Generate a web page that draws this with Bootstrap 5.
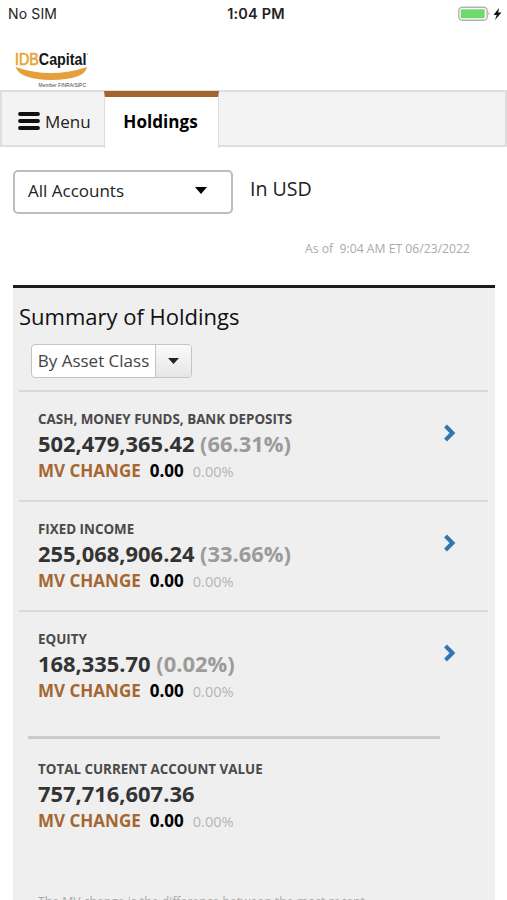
<!DOCTYPE html>
<html lang="en">
<head>
<meta charset="utf-8">
<meta name="viewport" content="width=device-width, initial-scale=1">
<title>Holdings</title>
<link href="https://cdn.jsdelivr.net/npm/bootstrap@5.3.0/dist/css/bootstrap.min.css" rel="stylesheet">
<style>
body{font-family:"Open Sans",sans-serif;color:#222;height:900px;overflow:hidden;line-height:1;white-space:nowrap}
.statusbar{height:28px;font-family:Inter,sans-serif;font-size:14px;padding:0 3px 0 8px;letter-spacing:.15px}
.statusbar>*{flex:1 1 0}
.statusbar>strong{font-size:14.5px}
.brand{height:62px;padding:20px 0 0 13px}
.tabs{height:57px;background:#f3f3f3;border:2px solid #dedede}
.menu-tab{width:102px;padding:3px 0 0 16px;gap:5px;font-size:17px}
.menu-tab svg{margin-top:1px}
.menu-tab span{padding-top:2px}
.hold-tab{width:115px;height:57px;margin-top:-1px;background:#fff;border-top:6px solid #a2632e;border-left:1px solid #dcdcdc;border-right:1px solid #dcdcdc;font-size:17.1px;color:#000;padding:0 2px 1px 0}
.filters{padding:23px 13px 0;gap:17px}
.acct{width:220px;height:44px;border:2px solid #bdbdbd;border-radius:5px;padding:0 24px 4px 13px;font-size:17px}
.usd{font-size:19.6px;padding-top:9px}
.asof{font-size:12.2px;color:#aaa;padding-right:37px;margin-top:29px;height:42px}
.holdings{margin:0 12px 0 13px;height:620px;background:#efefef;border-top:3px solid #1c1c1c;padding:0 7px 0 6px}
.title{font-size:22px;height:56px;padding-top:17px;margin:0;line-height:1;color:#111;font-weight:400}
.picker{width:161px;height:34px;margin-left:12px;border:1px solid #c4c4c4;border-radius:4px;background:#fff;font-size:17px;color:#444;overflow:hidden}
.picker>span:first-child{padding-bottom:2px}
.picker-arrow{width:36px;border-left:1px solid #c4c4c4;background:linear-gradient(#fafafa,#e6e6e6)}
.entry{height:110px;border-top:2px solid #d9d9d9;padding:21px 31px 0 19px}
.entry svg{margin-top:9px}
.entry:first-of-type{margin-top:12px}
.label{font-size:13.4px;font-weight:700;color:#4a4a4a;height:20px}
.value{font-size:21.9px;font-weight:700;color:#333;height:29px}
.pct{color:#9b9b9b}
.mv{font-size:17px;font-weight:700;color:#a5672f}
.mv b{color:#000;font-weight:700;margin-left:9px}
.mv i{color:#b5b5b5;font-weight:400;font-style:normal;font-size:14.6px;margin-left:9px}
.total{margin:16px 48px 0 9px;border-top:3px solid #cacaca;padding:24px 0 0 10px}
.note{font-size:12.2px;color:#aaa;margin-top:67px}
</style>
<script src="https://cdn.jsdelivr.net/npm/bootstrap@5.3.0/dist/js/bootstrap.bundle.min.js"></script>
</head>
<body class="bg-white">
<div class="statusbar d-flex align-items-center">
  <span>No SIM</span><strong class="text-center fw-semibold">1:04 PM</strong>
  <span class="text-end"><svg width="46" height="16" viewBox="0 0 46 16"><rect x=".8" y="1.200" width="28.4" height="13" rx="3.5" fill="#fff" stroke="#b3b3b3" stroke-width="1.4"/><rect x="2.7" y="3.200" width="24" height="9" rx="1" fill="#6fda6c"/><path d="M30.5 5.5q2 2 0 4z" fill="#aaa"/><path d="M41 2 35.5 9h3.2L37 14l6.5-7.5h-3.3z" fill="#111"/></svg></span>
</div>
<header class="brand"><svg class="d-block" width="80" height="42" viewBox="0 0 80 42"><text x="2" y="16.500" font-family="Liberation Sans, sans-serif" font-size="16.5" fill="#e9a33b" stroke="#e9a33b" stroke-width=".7" textLength="71.500" lengthAdjust="spacingAndGlyphs">IDB<tspan font-weight="700" fill="#161616" stroke="none">Capital</tspan></text><circle cx="74.5" cy="6" r=".5" fill="#555"/><path d="M2.500 19Q38 31 74 19 72 31.500 38 32 7 31.500 2.500 19Z" fill="#e5a03b"/><text x="25.500" y="38.500" font-family="Liberation Sans, sans-serif" font-size="5.300" textLength="47.500" lengthAdjust="spacingAndGlyphs" fill="#444">Member FINRA/SIPC</text></svg></header>
<nav class="tabs d-flex">
  <div class="menu-tab d-flex align-items-center"><svg width="22" height="20" viewBox="0 0 22 20" stroke="#111" stroke-width="3.8" stroke-linecap="round"><path d="M2 3h18M2 10h18M2 17h18"/></svg><span>Menu</span></div>
  <div class="hold-tab d-flex align-items-center justify-content-center fw-bold"><span>Holdings</span></div>
</nav>
<main>
<div class="filters d-flex">
  <div class="acct d-flex align-items-center justify-content-between"><span>All Accounts</span><svg width="12" height="7"><path d="M0 0h12L6 7z" fill="#000"/></svg></div>
  <div class="usd">In USD</div>
</div>
<div class="asof text-end">As of &nbsp;9:04 AM ET 06/23/2022</div>
<section class="holdings">
  <h1 class="title"><span>Summary of Holdings</span></h1>
  <div class="picker d-flex"><span class="flex-grow-1 d-flex align-items-center justify-content-center">By Asset Class</span><span class="picker-arrow d-flex align-items-center justify-content-center"><svg width="11" height="6"><path d="M0 0h11L5.500 6z" fill="#222"/></svg></span></div>
  <article class="entry d-flex justify-content-between"><div><div class="label">CASH, MONEY FUNDS, BANK DEPOSITS</div><div class="value">502,479,365.42 <span class="pct">(66.31%)</span></div><div class="mv">MV CHANGE<b>0.00</b><i>0.00%</i></div></div><svg width="14" height="22" viewBox="0 0 14 22"><path d="M2.500 4 9.500 11 2.500 18" fill="none" stroke="#3274b4" stroke-width="4"/></svg></article>
  <article class="entry d-flex justify-content-between"><div><div class="label">FIXED INCOME</div><div class="value">255,068,906.24 <span class="pct">(33.66%)</span></div><div class="mv">MV CHANGE<b>0.00</b><i>0.00%</i></div></div><svg width="14" height="22" viewBox="0 0 14 22"><path d="M2.500 4 9.500 11 2.500 18" fill="none" stroke="#3274b4" stroke-width="4"/></svg></article>
  <article class="entry d-flex justify-content-between"><div><div class="label">EQUITY</div><div class="value">168,335.70 <span class="pct">(0.02%)</span></div><div class="mv">MV CHANGE<b>0.00</b><i>0.00%</i></div></div><svg width="14" height="22" viewBox="0 0 14 22"><path d="M2.500 4 9.500 11 2.500 18" fill="none" stroke="#3274b4" stroke-width="4"/></svg></article>
  <div class="total"><div class="label">TOTAL CURRENT ACCOUNT VALUE</div><div class="value">757,716,607.36</div><div class="mv">MV CHANGE<b>0.00</b><i>0.00%</i></div><div class="note">The MV change is the difference between the most recent</div></div>
</section>
</main>
</body>
</html>
